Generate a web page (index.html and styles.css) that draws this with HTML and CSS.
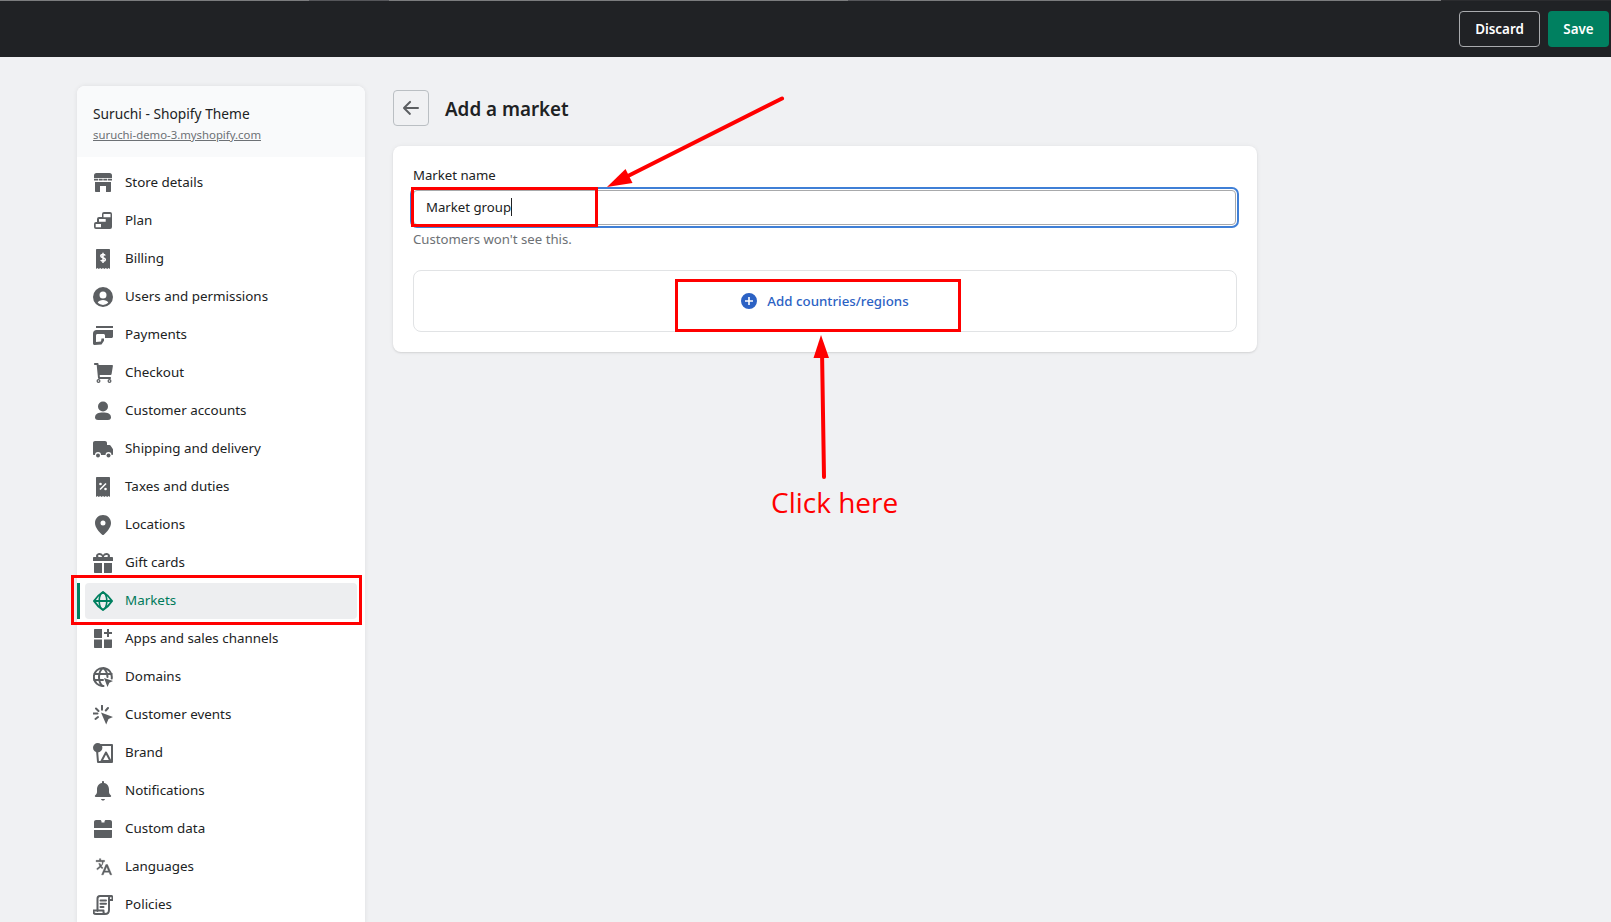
FILE: index.html
```html
<!DOCTYPE html>
<html lang="en">
<head>
<meta charset="utf-8">
<title>Add a market</title>
<link rel="stylesheet" href="styles.css">
</head>
<body>
<header class="topbar">
  <button class="btn btn-discard">Discard</button>
  <button class="btn btn-save">Save</button>
</header>
<div class="page">
  <aside class="sidebar">
    <div class="store-head">
      <div class="store-name">Suruchi - Shopify Theme</div>
      <a class="store-url">suruchi-demo-3.myshopify.com</a>
    </div>
    <nav class="nav">
      <a class="nav-item"><svg class="ico" viewBox="0 0 20 20"><path d="M3.500 0h13A2.500 2.500 0 0 1 19 2.500V5H1V2.500A2.500 2.500 0 0 1 3.500 0z"/><path d="M1 5.800h4v1.700H1zM5.700 5.800h4v1.700h-4zM10.300 5.800h4v1.700h-4zM15 5.800h4v1.700h-4z"/><path d="M2 9h16v9c0 .6-.4 1-1 1h-4v-6H7v6H3c-.6 0-1-.4-1-1z"/></svg><span>Store details</span></a>
      <a class="nav-item"><svg class="ico" viewBox="0 0 20 20"><path d="M9 3a2 2 0 0 1 2-2h6a2 2 0 0 1 2 2v13a2 2 0 0 1-2 2H3a2 2 0 0 1-2-2v-3a2 2 0 0 1 2-2h1V8a2 2 0 0 1 2-2h3z"/><path class="dot" d="M10.500 3H17.500V6.300H10.500zM6 8h6.700v2.700H6zM2.700 13H8v3.300H2.700z"/></svg><span>Plan</span></a>
      <a class="nav-item"><svg class="ico" viewBox="0 0 20 20"><path d="M4 0h12c.6 0 1 .4 1 1v19l-1.400-1-1.400 1-1.400-1-1.400 1L10 19l-1.400 1-1.400-1-1.400 1-1.400-1L3 20V1c0-.6.4-1 1-1z"/><path class="cut-thin" d="M12.200 6.500C11.800 5.800 11 5.400 10 5.400c-1.300 0-2.200.7-2.200 1.700 0 2.400 4.500 1 4.500 3.400 0 1-.9 1.700-2.300 1.700-1 0-1.800-.4-2.300-1.100M10 3.700v10.300"/></svg><span>Billing</span></a>
      <a class="nav-item"><svg class="ico" viewBox="0 0 20 20"><path fill-rule="evenodd" d="M10 0a10 10 0 1 1 0 20 10 10 0 0 1 0-20zm0 4.500a3.500 3.500 0 1 0 0 7 3.500 3.500 0 0 0 0-7zm0 8.500c-2.400 0-4.500 1-5.300 2.800A8 8 0 0 0 10 18a8 8 0 0 0 5.300-2.200C14.500 14 12.400 13 10 13z"/></svg><span>Users and permissions</span></a>
      <a class="nav-item"><svg class="ico" viewBox="0 0 20 20"><path d="M3 1h17v2H3z"/><path d="M3.500 5H20v6.500c0 .8-.7 1.500-1.500 1.500H12v-2.500c0-.8-.7-1.500-1.500-1.500H4.500c-1 0-1.500.7-1.500 1.500V17l5-.5.500-3h2.500v2.300L8.500 19.500l-7 .5c-.8 0-1.500-.7-1.500-1.500V8.500C0 6.500 1.500 5 3.500 5z"/></svg><span>Payments</span></a>
      <a class="nav-item"><svg class="ico" viewBox="0 0 20 20"><path d="M2 0h2.500c.6 0 1 .4 1 .9L5.700 2H19c.6 0 1 .5.900 1.100l-1.300 8c-.1.500-.5.900-1 .9H6.700l.2 2H17c.6 0 1 .4 1 1s-.4 1-1 1H6c-.5 0-.9-.4-1-.9L3.700 2H2c-.6 0-1-.4-1-1s.4-1 1-1z"/><path fill-rule="evenodd" d="M5.500 16a2 2 0 1 1 0 4 2 2 0 0 1 0-4zm11 0a2 2 0 1 1 0 4 2 2 0 0 1 0-4zm-11 1.300a.7.7 0 1 0 0 1.400.7.7 0 0 0 0-1.400zm11 0a.7.7 0 1 0 0 1.400.7.7 0 0 0 0-1.400z"/></svg><span>Checkout</span></a>
      <a class="nav-item"><svg class="ico" viewBox="0 0 20 20"><circle cx="10" cy="5.500" r="5"/><path d="M2 16.500c0-3.800 3.500-5 8-5s8 1.200 8 5c0 1.700-1.500 2.500-3 2.500H5c-1.500 0-3-.8-3-2.500z"/></svg><span>Customer accounts</span></a>
      <a class="nav-item"><svg class="ico" viewBox="0 0 20 20"><path d="M2 2h10c1.100 0 2 .9 2 2v2h2.500c.4 0 .8.200 1 .5l2.200 3.300c.2.300.3.500.3.800V15c0 .6-.4 1-1 1h-.5a3 3 0 0 0-6 0H8a3 3 0 0 0-6 0H1c-.6 0-1-.4-1-1V4c0-1.100.9-2 2-2z"/><circle cx="5" cy="16.500" r="2"/><circle cx="15.500" cy="16.500" r="2"/></svg><span>Shipping and delivery</span></a>
      <a class="nav-item"><svg class="ico" viewBox="0 0 20 20"><path d="M4 0h12c.6 0 1 .4 1 1v19l-1.400-1-1.400 1-1.400-1-1.400 1L10 19l-1.400 1-1.400-1-1.400 1-1.400-1L3 20V1c0-.6.4-1 1-1z"/><path class="cut" d="M7 12.500l6-6"/><circle class="dot" cx="7.500" cy="7" r="1.300"/><circle class="dot" cx="12.500" cy="12" r="1.300"/></svg><span>Taxes and duties</span></a>
      <a class="nav-item"><svg class="ico" viewBox="0 0 20 20"><path fill-rule="evenodd" d="M10 0c4.500 0 8 3.500 8 8 0 4.500-4.500 9.500-7.200 11.700-.5.400-1.100.4-1.600 0C6.500 17.500 2 12.500 2 8c0-4.500 3.500-8 8-8zm0 5.500a2.500 2.500 0 1 0 0 5 2.500 2.500 0 0 0 0-5z"/></svg><span>Locations</span></a>
      <a class="nav-item"><svg class="ico" viewBox="0 0 20 20"><path fill-rule="evenodd" d="M6.500 0c1.500 0 2.800.8 3.500 2 .7-1.200 2-2 3.500-2C15.400 0 17 1.400 17 3c0 .4-.1.700-.2 1H19c.6 0 1 .4 1 1v3H0V5c0-.6.4-1 1-1h2.200C3.100 3.700 3 3.400 3 3c0-1.600 1.600-3 3.500-3zm0 2C5.700 2 5 2.500 5 3s.7 1 1.500 1H9c0-1.100-1.200-2-2.500-2zm7 0C12.200 2 11 2.900 11 4h2.500c.8 0 1.500-.5 1.500-1s-.7-1-1.500-1z"/><path d="M1 10h8v10H2c-.6 0-1-.4-1-1zM11 10h8v9c0 .6-.4 1-1 1h-7z"/></svg><span>Gift cards</span></a>
      <a class="nav-item is-active"><svg class="ico" viewBox="0 0 20 20"><path class="ring" d="M10 1Q15.500 4.500 19 10 15.500 15.500 10 19 4.500 15.500 1 10 4.500 4.500 10 1zM1.500 10h17"/><ellipse class="ring ring-thin" cx="10" cy="10" rx="3.800" ry="8.500"/></svg><span>Markets</span></a>
      <a class="nav-item"><svg class="ico" viewBox="0 0 20 20"><path d="M2 0h7v9H2c-.6 0-1-.4-1-1V1c0-.6.400-1 1-1zM1 10.500h8V19H2c-.6 0-1-.4-1-1zM11 10.500h8V18c0 .6-.4 1-1 1h-7zM14 0h2v3h3v2h-3v3h-2V5h-3V3h3z"/></svg><span>Apps and sales channels</span></a>
      <a class="nav-item"><svg class="ico" viewBox="0 0 20 20"><path class="ring" d="M18.700 11.500A9 9 0 1 0 10.500 19M1.200 7h17.600M1 13h9M10 1C4.500 5 5 15 9.500 19M10 1c3 2 4.500 5.500 4.500 9"/><path d="M11 11l9 3-3.700 1.700L14.500 20z"/></svg><span>Domains</span></a>
      <a class="nav-item"><svg class="ico" viewBox="0 0 20 20"><path d="M8 7.500l12 4.500-4.500 2-2.300 5.500z"/><path class="ring" d="M9 .8v4M3 3.500l2.500 2.500M15 3l-2.200 2.500M0 8.500h4.500M2.500 14l2.500-2"/></svg><span>Customer events</span></a>
      <a class="nav-item"><svg class="ico" viewBox="0 0 20 20"><circle cx="4.700" cy="4.700" r="4.700"/><path class="ring" d="M6 2H19V19H5L4 7"/><path class="ring" d="M13 9.500 8.500 18h9z"/></svg><span>Brand</span></a>
      <a class="nav-item"><svg class="ico" viewBox="0 0 20 20"><path d="M10 0c.6 0 1 .4 1 1v1c3.400.5 5 3.300 5 6.500V11c0 1.500 1 2.500 2 3.500.4.500 0 1.500-.7 1.500H2.700c-.7 0-1.100-1-.7-1.500C3 13.500 4 12.500 4 11V8.500C4 5.300 5.600 2.500 9 2V1c0-.6.4-1 1-1zM8 18h4c0 .8-.9 1.500-2 1.500S8 18.800 8 18z"/></svg><span>Notifications</span></a>
      <a class="nav-item"><svg class="ico" viewBox="0 0 20 20"><path d="M3 1h4c.8 0 1.500.7 1.500 1.500V3.500h3V2.500c0-.8.7-1.500 1.500-1.500h4c1.100 0 2 .9 2 2v6H1V3c0-1.100.9-2 2-2zM1 11h18v7c0 .6-.4 1-1 1H2c-.6 0-1-.4-1-1z"/></svg><span>Custom data</span></a>
      <a class="nav-item"><svg class="ico" viewBox="0 0 20 20"><g class="lang" transform="translate(1.800 .8) scale(.85)"><path d="M5.500 1H7v2h4.500v1.600h-1.400C9.800 6.800 8.900 8.500 7.700 9.900l2 1.800-1 1.200-2-1.800-3.500 3.100-1.100-1.200 3.600-3.200C5.800 9 5.100 8 4.600 6.800h1.700c.4.700.8 1.400 1.300 2 .9-1.100 1.600-2.500 1-4.200H1.500V3h4z"/><path fill-rule="evenodd" d="M13 8h2l5 12h-2l-1.200-3h-5.600L10 20H8zm1 2.500L12 15.400h4z"/></g></svg><span>Languages</span></a>
      <a class="nav-item"><svg class="ico" viewBox="0 0 20 20"><path class="ring" d="M4.500 16V3.500c0-1.400 1-2.500 2.500-2.500h11c-1.200 0-2 1-2 2.200v11.500c0 2.700-1.800 4.300-4 4.300H3c-1.500 0-2.500-1-2.500-2.300V15.500h10v1.500c0 1 .8 2 2 2"/><path class="ring" d="M15.500 1H18c1 0 1.500.7 1.500 1.500V5h-3M7.500 5.500h5.500M7.500 8.800h5.500M7.500 12h3"/></svg><span>Policies</span></a>
    </nav>
  </aside>
  <main class="content">
    <div class="title-row">
      <button class="back"><svg class="back-ico" viewBox="0 0 20 20"><path d="M17 9H5.400l4.300-4.300a1 1 0 1 0-1.400-1.400l-6 6a1 1 0 0 0 0 1.400l6 6a1 1 0 0 0 1.400-1.400L5.400 11H17a1 1 0 1 0 0-2z"/></svg></button>
      <h1 class="title">Add a market</h1>
    </div>
    <section class="card">
      <div class="label">Market name</div>
      <div class="input"><span>Market group</span><i class="caret"></i></div>
      <div class="help">Customers won't see this.</div>
      <div class="add-box">
        <svg class="plus" viewBox="0 0 20 20"><path fill-rule="evenodd" d="M10 0a10 10 0 1 1 0 20 10 10 0 0 1 0-20zM9 5v4H5v2h4v4h2v-4h4V9h-4V5z"/></svg>
        <span>Add countries/regions</span>
      </div>
    </section>
  </main>
</div>
<div class="mark mark-markets"></div>
<div class="mark mark-input"></div>
<div class="mark mark-add"></div>
<svg class="arrows" viewBox="0 0 1611 922">
  <line x1="782" y1="98.500" x2="622" y2="179" class="arrow-line"/>
  <polygon points="607,187 625.500,169 632.500,183" class="arrow-head"/>
  <line x1="824" y1="477" x2="822" y2="350" class="arrow-line"/>
  <polygon points="821,335 813.500,358 829,358" class="arrow-head"/>
</svg>
<div class="click-here">Click here</div>
</body>
</html>
```
FILE: styles.css
```css
* { box-sizing: border-box; }
html, body { margin: 0; height: 922px; overflow: hidden; }
body {
  position: relative;
  background: #f0f1f3;
  font-family: "Noto Sans", "Open Sans", sans-serif;
  font-size: 13.4px;
  line-height: 20px;
  color: #202223;
}
.topbar {
  height: 57px;
  background: #202225;
  border-top: 1px solid #7b7c7e;
  border-image: linear-gradient(to right, #7b7c7e 0 310px, #55565a 310px 390px, #7b7c7e 390px 848px, #55565a 848px 890px, #7b7c7e 890px 1440px, #2b2c2f 1440px) 1;
  display: flex;
  justify-content: flex-end;
  align-items: center;
  gap: 8px;
  padding: 0 2px 0 0;
}
.btn {
  height: 36px;
  font: 600 13.4px/20px "Noto Sans", sans-serif;
  color: #fff;
  border-radius: 4px;
  cursor: pointer;
}
.btn-discard { width: 81px; background: #202225; border: 1px solid #a9abae; }
.btn-save { width: 61px; background: #008060; border: 0; }
.page {
  display: flex;
  align-items: flex-start;
  gap: 28px;
  padding: 29px 0 0 77px;
}
.sidebar {
  width: 288px;
  flex: none;
  background: #fff;
  border-radius: 8px 8px 0 0;
  box-shadow: 0 0 5px rgba(23, 24, 24, .08);
}
.store-head {
  height: 71px;
  padding: 18px 16px 0;
  background: #f9fafb;
  border-radius: 8px 8px 0 0;
}
.store-name { font-size: 13.750px; line-height: 20px; }
.store-url { display: block; margin-top: 1px; font-size: 11.350px; line-height: 20px; color: #6d7175; text-decoration: underline; }
.nav { padding-top: 7px; }
.nav-item {
  position: relative;
  height: 38px;
  display: flex;
  align-items: center;
  gap: 12px;
  padding-left: 16px;
}
.nav-item span { margin-bottom: 2px; }
.nav-item .ico { width: 20px; height: 20px; fill: #5c5f62; flex: none; }
.nav-item.is-active { color: #007a5a; }
.nav-item.is-active::before {
  content: "";
  position: absolute;
  z-index: 0;
  left: 8px;
  right: 8px;
  top: 1px;
  bottom: 1px;
  background: #edeef0;
  border-radius: 4px;
}
.nav-item.is-active::after {
  content: "";
  position: absolute;
  left: 0;
  top: 1px;
  bottom: 1px;
  width: 3px;
  background: #008060;
}
.nav-item.is-active .ico, .nav-item.is-active span { position: relative; z-index: 1; }
.nav-item.is-active .ring { stroke: #008060; }
.ring { fill: none; stroke: #5c5f62; stroke-width: 2; stroke-linecap: round; stroke-linejoin: round; }
.ring-thin { stroke-width: 1.600; }
.cut { fill: none; stroke: #fff; stroke-width: 1.6; }
.cut-thin { fill: none; stroke: #fff; stroke-width: 1.5; }
.dot { fill: #fff; }
.lang { stroke: #5c5f62; stroke-width: .5; }
.content { width: 864px; flex: none; }
.title-row { display: flex; align-items: center; gap: 16px; margin: 4px 0 20px; }
.back {
  width: 36px;
  height: 36px;
  padding: 0;
  display: flex;
  align-items: center;
  justify-content: center;
  background: transparent;
  border: 1px solid #babfc3;
  border-radius: 4px;
}
.back-ico { width: 20px; height: 20px; fill: #5c5f62; }
.title { margin: 0; padding-top: 2px; font-size: 18.800px; line-height: 28px; font-weight: 600; }
.card {
  background: #fff;
  border-radius: 8px;
  padding: 20px;
  font-size: 13.200px;
  box-shadow: 0 0 5px rgba(23, 24, 24, .05), 0 1px 2px rgba(0, 0, 0, .1);
}
.label { line-height: 20px; margin: -1px 0 5px; }
.input {
  height: 35px;
  margin-right: 1px;
  display: flex;
  align-items: center;
  padding: 0 0 1px 12px;
  border: 1px solid #a8a9ab;
  border-radius: 4px;
  outline: 2px solid #3f7fd6;
  outline-offset: 1px;
}
.caret { width: 1px; height: 18px; background: #202223; }
.help { margin-top: 4px; padding-bottom: 1px; color: #6d7175; }
.add-box {
  margin-top: 20px;
  height: 62px;
  display: flex;
  align-items: center;
  justify-content: center;
  gap: 10px;
  border: 1px solid #e1e3e5;
  border-radius: 8px;
  font-size: 13.300px;
  font-weight: 500;
  color: #2c62c4;
}
.plus { width: 16px; height: 16px; fill: #2c62c4; }
.mark { position: absolute; border: 3px solid #f00; }
.mark-markets { left: 71px; top: 575px; width: 291px; height: 50px; }
.mark-input { left: 411px; top: 187px; width: 187px; height: 40px; }
.mark-add { left: 675px; top: 279px; width: 286px; height: 53px; }
.arrows { position: absolute; left: 0; top: 0; width: 1611px; height: 922px; pointer-events: none; }
.arrow-line { stroke: #f00; stroke-width: 4; stroke-linecap: round; }
.arrow-head { fill: #f00; }
.click-here {
  position: absolute;
  left: 771px;
  top: 482px;
  font-family: "Open Sans", sans-serif;
  font-size: 28px;
  line-height: 40px;
  color: #f00;
}
```
